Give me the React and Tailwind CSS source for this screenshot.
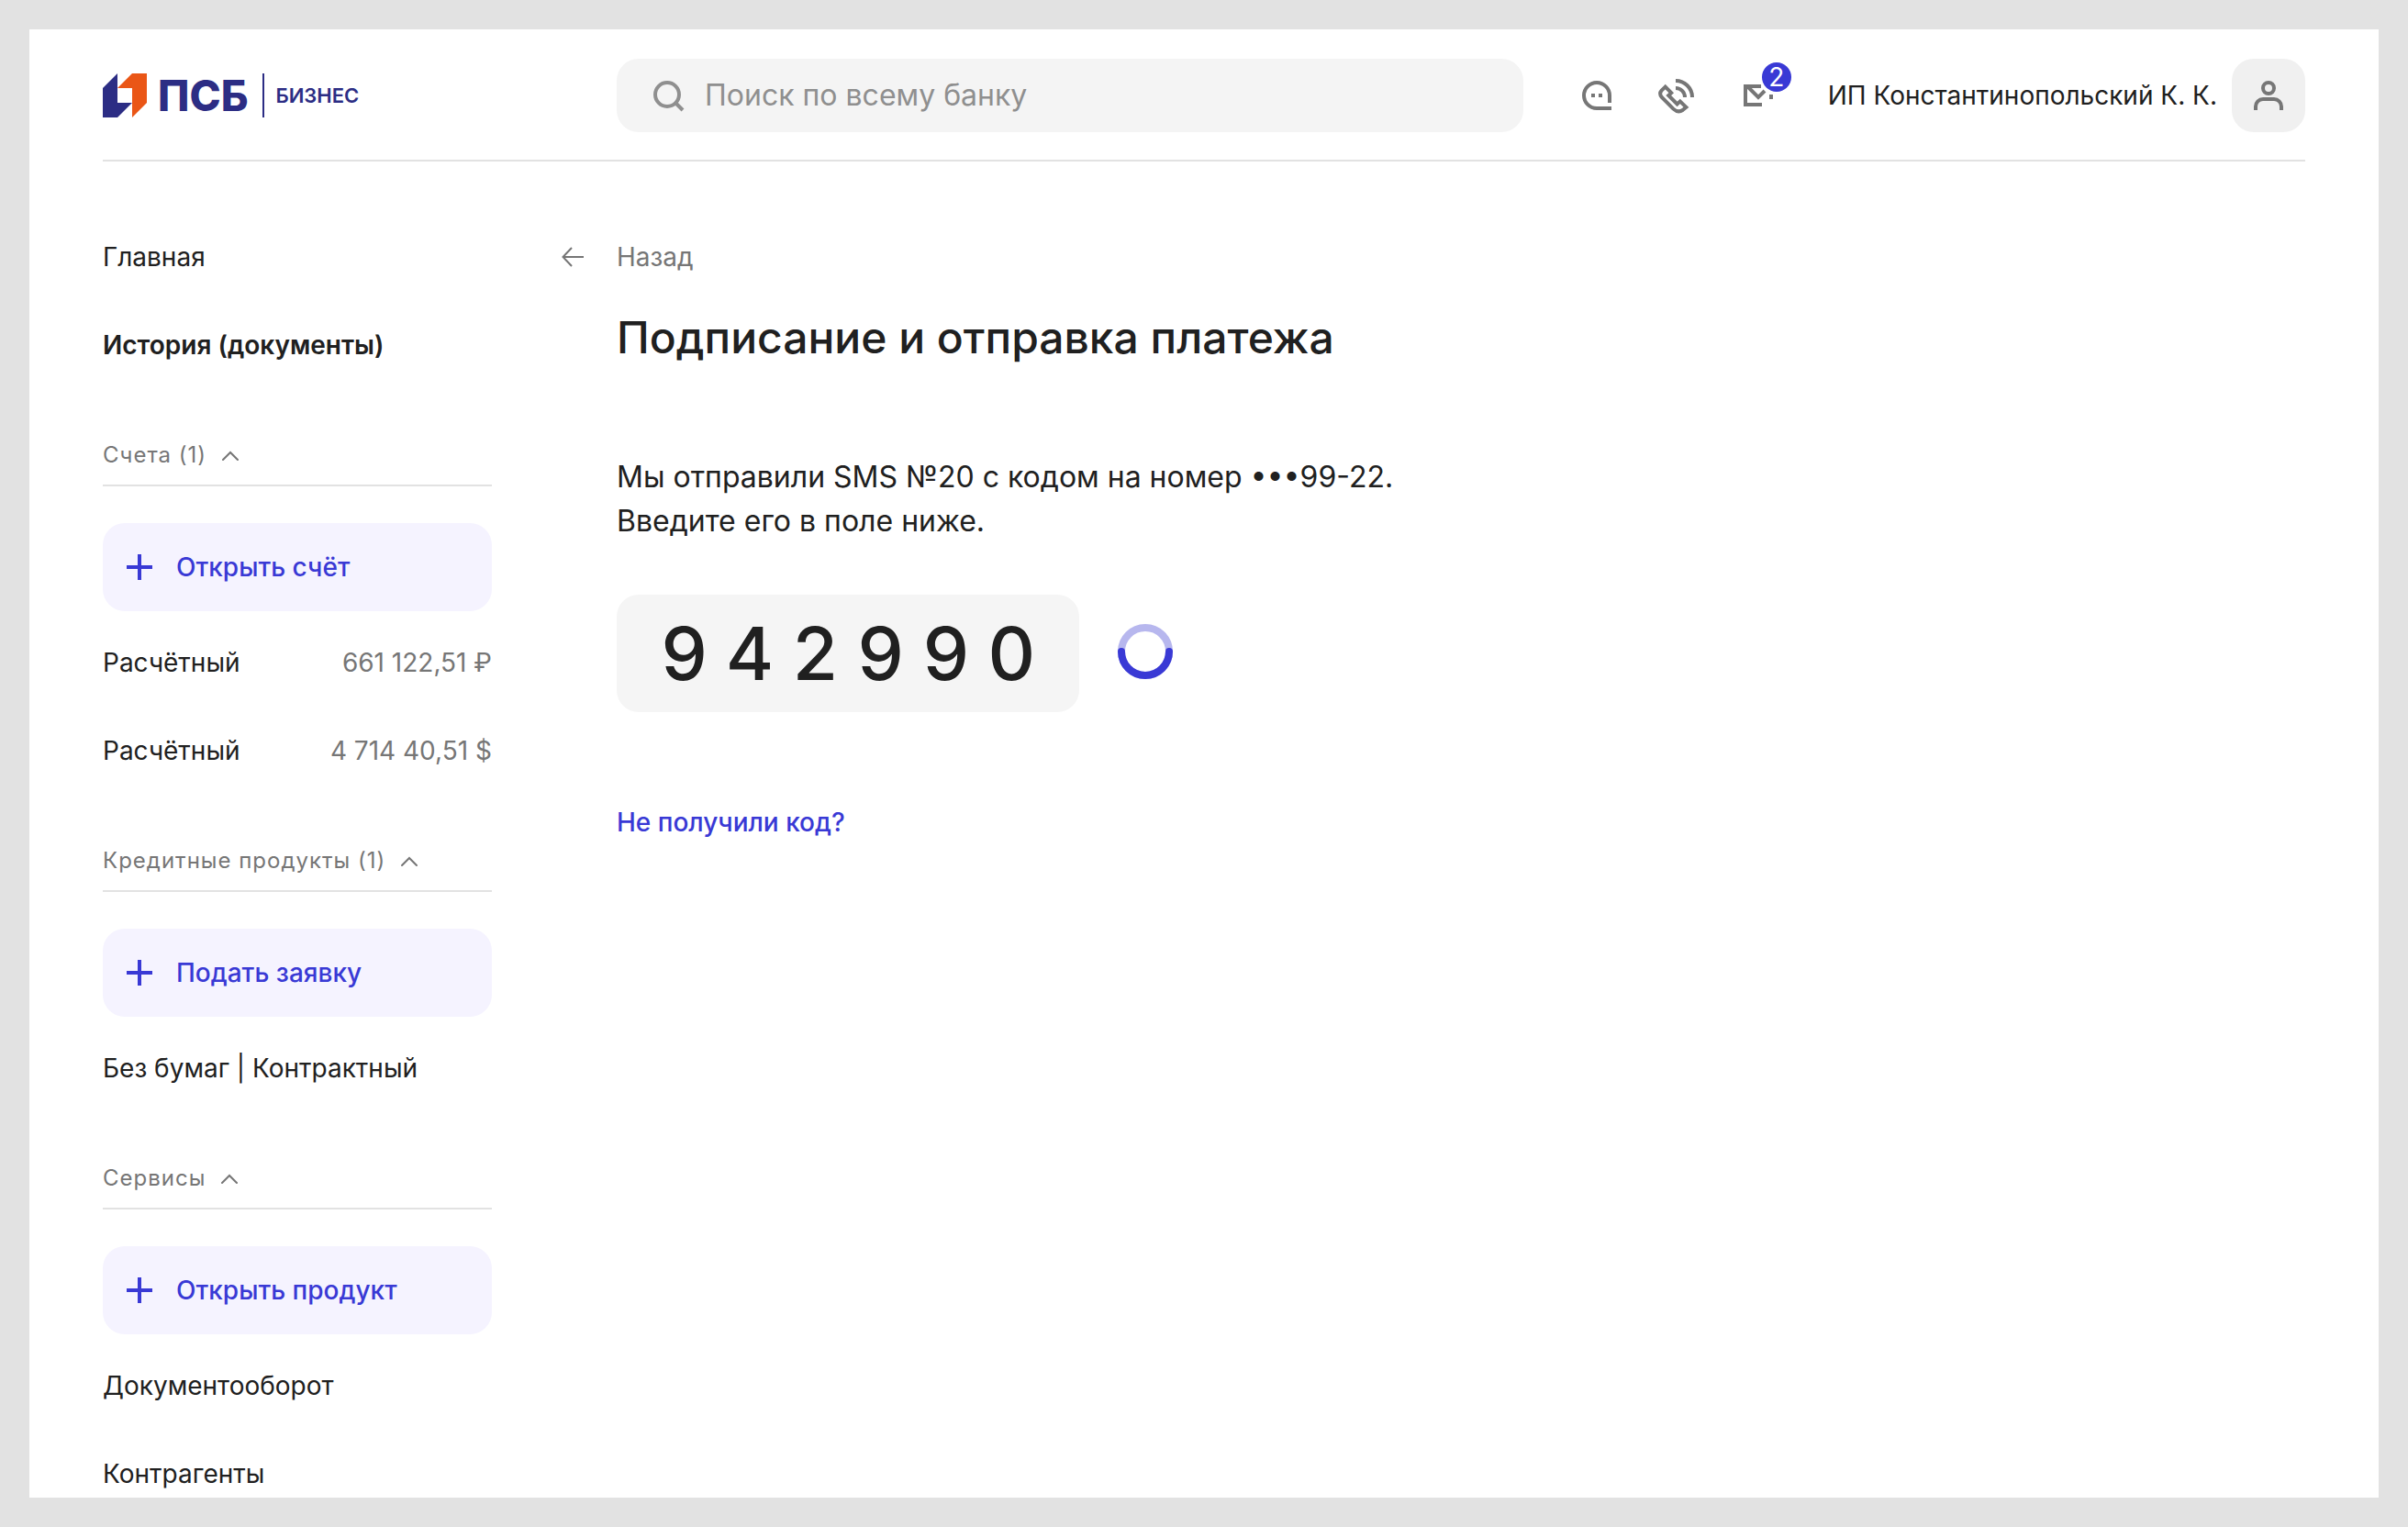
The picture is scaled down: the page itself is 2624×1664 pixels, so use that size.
import React from "react";

function LogoMark() {
  return (
    <svg width="48" height="48" viewBox="0 0 48 48" aria-hidden="true">
      <path d="M0 16 16 0V32H32L16 48H0Z" fill="#2c2d84" />
      <path d="M32 0H48V32L32 48V16H16Z" fill="#ea5616" />
    </svg>
  );
}

function SearchIcon() {
  return (
    <svg width="48" height="48" viewBox="0 0 48 48" fill="none" stroke="#8f8f8f" strokeWidth="4" aria-hidden="true">
      <circle cx="23" cy="23" r="13" />
      <path d="M32 32 40 40" />
    </svg>
  );
}

function ChatIcon() {
  return (
    <svg width="48" height="48" viewBox="0 0 48 48" fill="none" stroke="#767676" strokeWidth="4" aria-hidden="true">
      <path d="M38 32V24A14 14 0 1 0 24 38H40" />
      <path d="M18 24H22M26 24H30" />
    </svg>
  );
}

function PhoneIcon() {
  return (
    <svg width="48" height="48" viewBox="0 0 48 48" fill="none" stroke="#767676" strokeWidth="4" aria-hidden="true">
      <path d="M22 8A18 18 0 0 1 40 26" />
      <path d="M22 16A10 10 0 0 1 32 26" />
      <path d="M10.7 14.6 6.6 18.6Q3.6 22 6.8 26L19.4 38.6Q24.6 43.4 29.6 40L33.4 36.8 26.8 30.4 23.6 33.4 14.2 24 17.2 21.2Z" />
    </svg>
  );
}

function MailIcon() {
  return (
    <svg width="48" height="48" viewBox="0 0 48 48" fill="none" stroke="#767676" strokeWidth="4" aria-hidden="true">
      <path d="M27 14H10V34H28" />
      <path d="M12 14 24 26 31 19" />
      <path d="M38 23V28" />
    </svg>
  );
}

function UserIcon() {
  return (
    <svg width="48" height="48" viewBox="0 0 48 48" fill="none" stroke="#767676" strokeWidth="4" aria-hidden="true">
      <circle cx="24" cy="16" r="6" />
      <path d="M10 40V36A8 8 0 0 1 18 28H30A8 8 0 0 1 38 36V40" />
    </svg>
  );
}

function PlusIcon() {
  return (
    <svg width="48" height="48" viewBox="0 0 48 48" fill="none" stroke="#3939d5" strokeWidth="4" aria-hidden="true">
      <path d="M24 10V38M10 24H38" />
    </svg>
  );
}

function ChevronUp() {
  return (
    <svg width="24" height="24" viewBox="0 0 24 24" fill="none" stroke="#767676" strokeWidth="2" strokeLinecap="round" aria-hidden="true">
      <path d="M4 17 12 9 20 17" />
    </svg>
  );
}

function BackIcon() {
  return (
    <svg width="24" height="24" viewBox="0 0 24 24" fill="none" stroke="#767676" strokeWidth="2" aria-hidden="true">
      <path d="M24 12H2M11 2 1.5 12 11 22" />
    </svg>
  );
}

function Spinner() {
  return (
    <svg className="mt-8" width="60" height="60" viewBox="0 0 60 60" fill="none" strokeWidth="8" role="img" aria-label="Проверка кода">
      <circle cx="30" cy="30" r="26" stroke="#b7b7ee" />
      <path d="M4 30A26 26 0 0 0 56 30" stroke="#3939d5" strokeLinecap="round" />
    </svg>
  );
}

const sections = [
  {
    title: "Счета (1)",
    action: "Открыть счёт",
    rows: [
      { name: "Расчётный", value: "661 122,51 ₽" },
      { name: "Расчётный", value: "4 714 40,51 $" },
    ],
  },
  {
    title: "Кредитные продукты (1)",
    action: "Подать заявку",
    rows: [{ name: "Без бумаг | Контрактный" }],
  },
  {
    title: "Сервисы",
    action: "Открыть продукт",
    rows: [{ name: "Документооборот" }, { name: "Контрагенты" }],
  },
];

function Header() {
  return (
    <header className="flex items-center border-b-2 border-[#e2e2e2] pt-8 pb-[30px]">
      <div className="w-[560px] shrink-0">
        <a href="#" className="flex w-fit items-center text-[#2c2d84]">
          <LogoMark />
          <span className="ml-3 text-[46px] leading-[48px] font-extrabold">ПСБ</span>
          <span className="ml-4 h-12 w-[2px] bg-[#2c2d84]" />
          <span className="ml-3 text-[22px] leading-8 font-semibold">БИЗНЕС</span>
        </a>
      </div>
      <label className="flex h-20 min-w-0 flex-1 items-center gap-4 rounded-3xl bg-[#f4f4f4] px-8">
        <SearchIcon />
        <input
          type="text"
          aria-label="Поиск по всему банку"
          placeholder="Поиск по всему банку"
          className="min-w-0 flex-1 bg-transparent text-[32px] leading-[48px] outline-none placeholder:text-[#8f8f8f]"
        />
      </label>
      <div className="ml-14 flex gap-10">
        <button type="button" aria-label="Чат"><ChatIcon /></button>
        <button type="button" aria-label="Звонок"><PhoneIcon /></button>
        <button type="button" aria-label="Сообщения" className="relative">
          <MailIcon />
          <span className="absolute -top-3 -right-3 flex size-8 items-center justify-center rounded-full bg-[#3939d5] text-[28px] leading-8 text-white">
            2
          </span>
        </button>
      </div>
      <a href="#" className="ml-[52px] flex items-center gap-4">
        <span className="text-[28px] leading-10 whitespace-nowrap">ИП Константинопольский К. К.</span>
        <span className="flex size-20 items-center justify-center rounded-3xl bg-[#f0f0f0]">
          <UserIcon />
        </span>
      </a>
    </header>
  );
}

function Section({ title, action, rows }) {
  return (
    <section>
      <button
        type="button"
        aria-expanded="true"
        className="flex w-full items-center gap-3.5 border-b-2 border-[#e2e2e2] pt-14 pb-4 text-2xl leading-8 tracking-[1px] text-[#767676]"
      >
        {title}
        <ChevronUp />
      </button>
      <button
        type="button"
        className="mt-10 mb-2 flex h-24 w-full items-center gap-4 rounded-3xl bg-[#f5f3ff] px-4 text-[28px] leading-10 font-medium text-[#3939d5]"
      >
        <PlusIcon />
        {action}
      </button>
      {rows.map((row, i) => (
        <a key={i} href="#" className="flex h-24 items-center justify-between">
          <span>{row.name}</span>
          {row.value && <span className="text-[#767676]">{row.value}</span>}
        </a>
      ))}
    </section>
  );
}

function Sidebar() {
  return (
    <nav className="w-[424px] shrink-0 text-[28px] leading-10">
      <a href="#" className="flex h-24 items-center">Главная</a>
      <a href="#" className="flex h-24 items-center font-semibold">История (документы)</a>
      {sections.map((s) => (
        <Section key={s.title} {...s} />
      ))}
    </nav>
  );
}

function SignForm() {
  return (
    <main className="min-w-0 flex-1">
      <a href="#" className="flex h-24 w-fit items-center gap-9 text-[28px] leading-10 text-[#767676]">
        <BackIcon />
        Назад
      </a>
      <div className="pl-[60px]">
        <h1 className="mt-2 text-5xl leading-[64px] font-medium">Подписание и отправка платежа</h1>
        <p className="mt-24 text-[32px] leading-[48px]">
          Мы отправили SMS №20 с кодом на номер •••99-22.
          <br />
          Введите его в поле ниже.
        </p>
        <div className="mt-14 flex items-start gap-[42px]">
          <div role="group" aria-label="Код из SMS" className="flex h-32 w-[504px] items-center rounded-3xl bg-[#f5f5f5] px-[38px]">
            {"942990".split("").map((d, i) => (
              <input
                key={i}
                type="text"
                inputMode="numeric"
                maxLength={1}
                defaultValue={d}
                aria-label={`Цифра ${i + 1}`}
                className="w-0 min-w-0 flex-1 bg-transparent text-center text-[80px] leading-[96px] font-medium outline-none"
              />
            ))}
          </div>
          <Spinner />
        </div>
        <a href="#" className="mt-[100px] block w-fit text-[28px] leading-10 font-medium text-[#3939d5]">
          Не получили код?
        </a>
      </div>
    </main>
  );
}

export default function App() {
  return (
    <div className="h-screen bg-[#e2e2e2] p-8 font-['Inter',sans-serif] text-[#202020]">
      <div className="h-full overflow-hidden bg-white px-20">
        <Header />
        <div className="mt-14 flex gap-[76px]">
          <Sidebar />
          <SignForm />
        </div>
      </div>
    </div>
  );
}
